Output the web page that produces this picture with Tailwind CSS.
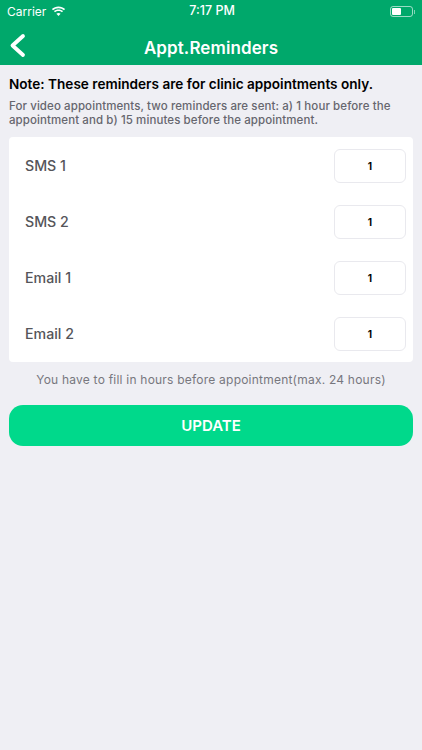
<!DOCTYPE html>
<html>
<head>
<meta charset="utf-8">
<script src="https://cdn.jsdelivr.net/npm/@tailwindcss/browser@4"></script>
</head>
<body class="m-0 h-[750px] w-[422px] overflow-hidden bg-[#efeff4] font-['Inter',sans-serif]">
<header class="h-[65px] bg-[#00a86b] text-white">
  <div class="flex h-[22px] items-center pt-[1px] pl-[7px] pr-[7px] text-[12px]">
    <div class="flex flex-1 items-center gap-[5px]">
      <span>Carrier</span>
      <svg width="15" height="11" viewBox="0 0 15 11" fill="#fff"><path d="M7.5 2.2c2.1 0 4 .8 5.5 2.1l1.1-1.2C12.3 1.5 10 .6 7.5.6S2.700 1.500.9 3.100L2 4.300c1.500-1.300 3.400-2.100 5.500-2.100z"/><path d="M7.500 5c1.300 0 2.500.5 3.500 1.300l1.100-1.200C10.900 4 9.300 3.400 7.500 3.400S4.100 4 2.900 5.100L4 6.300C5 5.500 6.200 5 7.500 5z"/><path d="M7.500 6.900c-.8 0-1.500.3-2.100.8l2.100 2.400 2.100-2.400c-.6-.5-1.300-.8-2.100-.8z"/></svg>
    </div>
    <span class="ml-[2px] text-[12.500px] font-medium">7:17 PM</span>
    <div class="flex flex-1 items-center justify-end">
      <div class="flex h-[11px] w-[23px] items-center rounded-[3px] border border-white/60 p-[1px]"><div class="h-full w-[9px] rounded-[1px] bg-white"></div></div>
      <div class="ml-[1px] h-[4px] w-[1px] bg-white/50"></div>
    </div>
  </div>
  <div class="relative flex h-[43px] items-center justify-center pt-[10px]">
    <svg class="absolute left-[9px] top-[11px]" width="17" height="25" viewBox="0 0 17 25" fill="none" stroke="#fff" stroke-width="3.800" stroke-linecap="round" stroke-linejoin="round"><path d="M14 3 L3.500 12.500 L14 22"/></svg>
    <h1 class="text-[17px] font-semibold tracking-[0.1px]">Appt.Reminders</h1>
  </div>
</header>
<main class="px-[9px]">
  <p class="mt-[11px] text-[13.600px] leading-[16px] font-semibold text-black">Note: These reminders are for clinic appointments only.</p>
  <p class="mt-[8px] text-[11.500px] leading-[13.500px] font-medium tracking-[0.09px] text-[#66666e]">For video appointments, two reminders are sent: a) 1 hour before the appointment and b) 15 minutes before the appointment.</p>
  <section class="mt-[10px] h-[225px] rounded-[4px] bg-white pt-[12px] pl-[16px] pr-[7px]">
    <div class="flex h-[56px] items-start justify-between"><span class="mt-[7px] text-[14.200px] leading-[20px] font-medium text-[#55555a]">SMS 1</span><div class="flex h-[34px] w-[72px] items-center justify-center rounded-[6px] border border-[#e9e9ee] text-[10px] font-bold text-black">1</div></div>
    <div class="flex h-[56px] items-start justify-between"><span class="mt-[7px] text-[14.200px] leading-[20px] font-medium text-[#55555a]">SMS 2</span><div class="flex h-[34px] w-[72px] items-center justify-center rounded-[6px] border border-[#e9e9ee] text-[10px] font-bold text-black">1</div></div>
    <div class="flex h-[56px] items-start justify-between"><span class="mt-[7px] text-[14.200px] leading-[20px] font-medium text-[#55555a]">Email 1</span><div class="flex h-[34px] w-[72px] items-center justify-center rounded-[6px] border border-[#e9e9ee] text-[10px] font-bold text-black">1</div></div>
    <div class="flex h-[56px] items-start justify-between"><span class="mt-[7px] text-[14.200px] leading-[20px] font-medium text-[#55555a]">Email 2</span><div class="flex h-[34px] w-[72px] items-center justify-center rounded-[6px] border border-[#e9e9ee] text-[10px] font-bold text-black">1</div></div>
  </section>
  <p class="mt-[10px] text-center text-[12px] leading-[16px] tracking-[0.22px] text-[#77777e]">You have to fill in hours before appointment(max. 24 hours)</p>
  <button class="mt-[17px] flex h-[41px] w-full items-center justify-center rounded-[14px] bg-[#00d98b] pt-[1px] text-[15px] font-semibold text-white">UPDATE</button>
</main>
</body>
</html>
